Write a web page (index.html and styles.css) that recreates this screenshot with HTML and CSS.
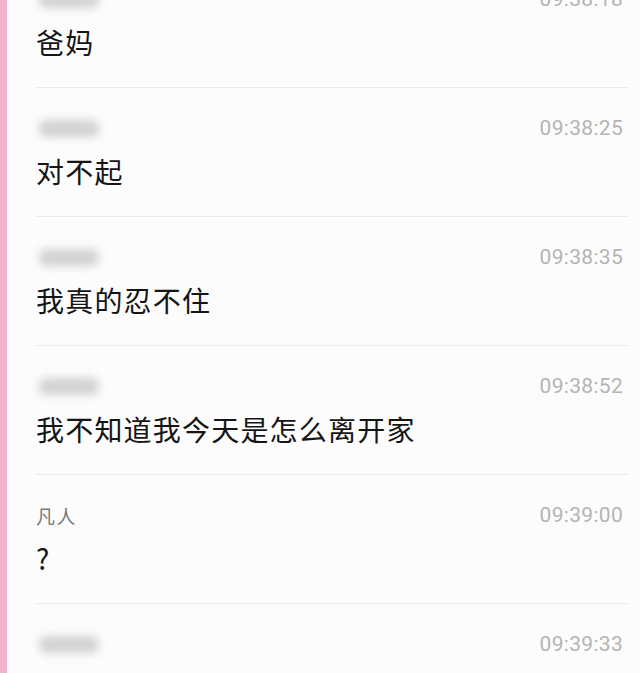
FILE: index.html
```html
<!DOCTYPE html>
<html lang="zh">
<head>
    <meta charset="UTF-8">
    <meta name="viewport" content="width=device-width, initial-scale=1.0">
    <title>聊天记录</title>
    <link rel="stylesheet" href="styles.css">
</head>
<body>
    <div class="page">
        <div class="sideBar"></div>
        <section class="chatList">
            <div class="chatRow">
                <div class="rowHead">
                    <span class="nameBlur"></span>
                    <span class="time">09:38:18</span>
                </div>
                <div class="message">爸妈</div>
            </div>
            <div class="chatRow">
                <div class="rowHead">
                    <span class="nameBlur"></span>
                    <span class="time">09:38:25</span>
                </div>
                <div class="message">对不起</div>
            </div>
            <div class="chatRow">
                <div class="rowHead">
                    <span class="nameBlur"></span>
                    <span class="time">09:38:35</span>
                </div>
                <div class="message">我真的忍不住</div>
            </div>
            <div class="chatRow">
                <div class="rowHead">
                    <span class="nameBlur"></span>
                    <span class="time">09:38:52</span>
                </div>
                <div class="message">我不知道我今天是怎么离开家</div>
            </div>
            <div class="chatRow">
                <div class="rowHead">
                    <span class="name">凡人</span>
                    <span class="time">09:39:00</span>
                </div>
                <div class="message">?</div>
            </div>
            <div class="chatRow">
                <div class="rowHead">
                    <span class="nameBlur"></span>
                    <span class="time">09:39:33</span>
                </div>
                <div class="message">我走的时候他们还在睡觉</div>
            </div>
        </section>
    </div>
</body>
</html>
```

FILE: styles.css
```css
html, body {
    margin: 0;
    height: 100%;
    overflow: hidden;
    background-color: #fcfcfc;
}

.page {
    display: flex;
    height: 100%;
}

/* dải hồng bên trái */
.sideBar {
    width: 7px;
    flex-shrink: 0;
    background-color: #f4b3cd;
}

.chatList {
    flex: 1;
    margin-top: -41px;
    padding-left: 29px;
    padding-right: 12px;
}

.chatRow {
    padding: 28px 0 27px;
    border-bottom: 1px solid #ebebeb;
}

.rowHead {
    display: flex;
    justify-content: space-between;
    align-items: center;
    height: 24px;
    margin-bottom: 13px;
}

.nameBlur {
    display: block;
    width: 60px;
    height: 17px;
    margin-left: 3px;
    border-radius: 7px;
    background-color: #d2d2d2;
    filter: blur(4px);
}

.name {
    font-family: "Noto Sans CJK SC", "Noto Sans", sans-serif;
    font-size: 19px;
    letter-spacing: 1.5px;
    color: #7a7a7a;
}

.time {
    padding-right: 5px;
    font-family: Roboto, "Noto Sans", sans-serif;
    font-size: 21px;
    letter-spacing: 0.3px;
    color: #b4b4b4;
}

.message {
    height: 36px;
    line-height: 36px;
    font-family: "Noto Sans CJK SC", "Noto Sans", sans-serif;
    font-size: 28px;
    letter-spacing: 1.2px;
    color: #151515;
    white-space: nowrap;
}
```
